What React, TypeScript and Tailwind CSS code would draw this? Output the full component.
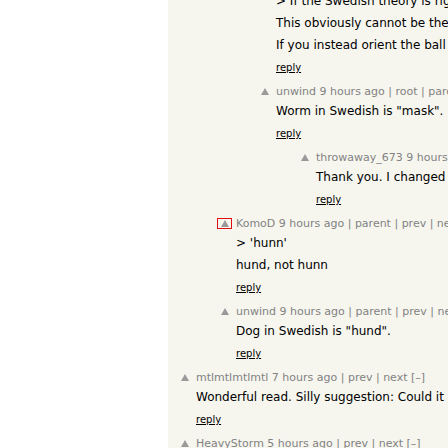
import React from "react";

type Comment = {
  level: number;
  meta?: string;
  paras: string[];
  focused?: boolean;
  lead?: boolean;
};

const comments: Comment[] = [
  {
    level: 2,
    lead: true,
    paras: [
      "> If the Swedish theory is right, the word would have been borrowed",
      "This obviously cannot be the case, since the words are unrelated.",
      "If you instead orient the ball the other way around it works.",
    ],
  },
  { level: 2, meta: "unwind 9 hours ago | root | parent | prev | next [–]", paras: ['Worm in Swedish is "mask".'] },
  { level: 3, meta: "throwaway_673 9 hours ago | parent | next [–]", paras: ["Thank you. I changed it in the post."] },
  {
    level: 1,
    focused: true,
    meta: "KomoD 9 hours ago | parent | prev | next [–]",
    paras: ["> 'hunn'", "hund, not hunn"],
  },
  { level: 1, meta: "unwind 9 hours ago | parent | prev | next [–]", paras: ['Dog in Swedish is "hund".'] },
  {
    level: 0,
    meta: "mtlmtlmtlmtl 7 hours ago | prev | next [–]",
    paras: ["Wonderful read. Silly suggestion: Could it be that the ball was"],
  },
  { level: 0, meta: "HeavyStorm 5 hours ago | prev | next [–]", paras: [] },
];

function VoteArrow({ focused }: { focused?: boolean }) {
  return (
    <div
      className={`ml-[9px] mt-[1px] flex h-[11px] w-[15px] items-center justify-center border ${
        focused ? "border-[#e01010]" : "border-transparent"
      }`}
    >
      <svg width="8" height="7" viewBox="0 0 8 7">
        <polygon points="4,0 8,7 0,7" fill="#9a9a9a" />
      </svg>
    </div>
  );
}

function CommentRow({ c }: { c: Comment }) {
  return (
    <div className={`flex ${c.lead ? "-mt-[7px]" : ""}`} style={{ paddingLeft: c.level * 40 }}>
      <div className="w-[28px] shrink-0">{c.meta && <VoteArrow focused={c.focused} />}</div>
      <div className="mb-[10px] whitespace-nowrap">
        {c.meta && <div className="h-[14px] text-[11px] leading-[14px] text-[#828282]">{c.meta}</div>}
        {c.paras.map((p, i) => (
          <p key={i} className={`text-[12px] leading-[16px] text-black ${i === 0 ? (c.meta ? "mt-[4px]" : "") : "mt-[6px]"}`}>
            {p}
          </p>
        ))}
        {c.paras.length > 0 && (
          <div className="mt-[8px] text-[10px] leading-[14px] text-black underline">reply</div>
        )}
      </div>
    </div>
  );
}

export default function App() {
  return (
    <div className="flex h-[448px] w-[448px] overflow-hidden bg-white" style={{ fontFamily: '"DejaVu Sans", Verdana, sans-serif' }}>
      <div className="w-[168px] shrink-0" />
      <div className="min-w-[700px] bg-[#f6f6ef]">
        {comments.map((c, i) => (
          <CommentRow key={i} c={c} />
        ))}
      </div>
    </div>
  );
}
